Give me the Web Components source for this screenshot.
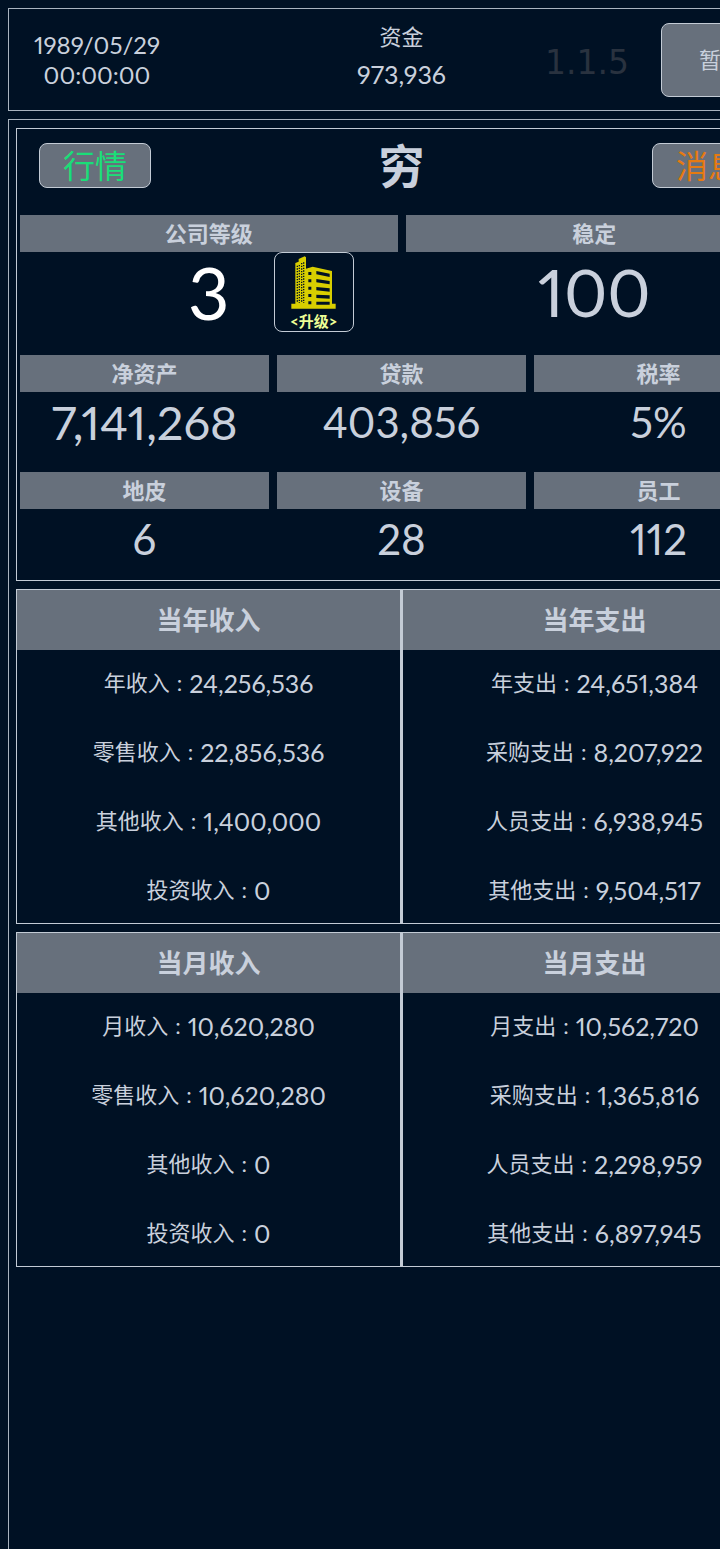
<!DOCTYPE html>
<html lang="zh-CN">
<head>
<meta charset="utf-8">
<meta name="viewport" content="width=device-width, initial-scale=1">
<title>穷</title>
<style>
  html {
    --bg: #001124;
    --bar: #67707c;
    --line: #a9b3bf;
    --line-strong: #c3cbd5;
    --text: #c9d0dc;
    background: var(--bg);
  }
  body {
    margin: 0;
    overflow: hidden;
    color: var(--text);
    font-family: Lato, "Noto Sans CJK SC", sans-serif;
    font-size: 22px;
    font-variant-numeric: proportional-nums;
  }
</style>
</head>
<body>
<game-app></game-app>

<script>
class GameButton extends HTMLElement {
  constructor() {
    super();
    this.attachShadow({ mode: "open" });
    this.shadowRoot.innerHTML = `
    <style>
      :host {
        display: inline-block;
      }
      button {
        display: block;
        box-sizing: border-box;
        width: 100%;
        height: 100%;
        margin: 0;
        padding: 0;
        border: 1px solid var(--line-strong);
        border-radius: 8px;
        background: var(--button-bg, var(--bar));
        color: inherit;
        font: inherit;
        white-space: nowrap;
        cursor: pointer;
      }
    </style>
    <button type="button"><slot></slot></button>
    `;
  }
}
customElements.define("game-button", GameButton);

class TopBar extends HTMLElement {
  constructor() {
    super();
    this.attachShadow({ mode: "open" });
    this.shadowRoot.innerHTML = `
    <style>
      :host {
        display: grid;
        grid-template-columns: 268px 1fr 122px 146px;
        align-items: center;
        padding: 13px 0;
        border: 1px solid var(--line);
        text-align: center;
        line-height: 30px;
      }
      .date {
        width: 176px;
        font-size: 24px;
      }
      .money {
        display: grid;
        gap: 7px;
        padding-bottom: 8px;
      }
      .money b {
        font-size: 25px;
        font-weight: normal;
      }
      .version {
        padding-top: 6px;
        color: #29323f;
        font-family: "DejaVu Sans", sans-serif;
        font-size: 33px;
      }
      game-button {
        width: 120px;
        height: 74px;
        justify-self: center;
      }
    </style>
    <div class="date">1989/05/29<br>00:00:00</div>
    <div class="money"><span>资金</span><b>973,936</b></div>
    <div class="version">1.1.5</div>
    <game-button>暂停</game-button>
    `;
  }
}
customElements.define("top-bar", TopBar);

class StatCell extends HTMLElement {
  constructor() {
    super();
    this.attachShadow({ mode: "open" });
    this.shadowRoot.innerHTML = `
    <style>
      :host {
        display: block;
        text-align: center;
      }
      h3 {
        margin: 0;
        background: var(--bar);
        font-size: 22px;
        font-weight: bold;
        line-height: 37px;
      }
      .value {
        display: grid;
        grid-template-columns: 1fr 130px 1fr;
        align-items: center;
        height: var(--value-height, 60px);
        font-size: 42px;
        line-height: 60px;
      }
      .number {
        grid-column: 2;
        justify-self: center;
        white-space: nowrap;
      }
      :host([size="medium"]) .value {
        font-size: 47px;
      }
      :host([size="large"]) .value {
        font-size: 66px;
      }
      :host([size="huge"]) .value {
        font-size: 72px;
      }
      :host([bright]) .value {
        color: #fff;
      }
    </style>
    <h3></h3>
    <div class="value"><span class="number"><slot></slot></span><slot name="action"></slot></div>
    `;
  }
  connectedCallback() {
    this.shadowRoot.querySelector("h3").textContent = this.getAttribute("label");
  }
}
customElements.define("stat-cell", StatCell);

class UpgradeButton extends HTMLElement {
  constructor() {
    super();
    this.attachShadow({ mode: "open" });
    this.shadowRoot.innerHTML = `
    <style>
      :host {
        display: block;
        width: 80px;
        height: 80px;
      }
      game-button {
        --button-bg: transparent;
        width: 100%;
        height: 100%;
        color: #eeff96;
        font-size: 15px;
        font-weight: bold;
        line-height: 18px;
      }
      svg {
        display: block;
        width: 46px;
        height: 54px;
        margin: 2px auto 2px;
      }
    </style>
    <game-button>
      <svg viewBox="84 33 138 162" aria-hidden="true">
        <path fill="#d8ce00" d="M97 54l10-4v-8l18-8 4 3v34l20-6 58 13v98h11v15H85v-15h12z"/>
        <path stroke="#001124" stroke-width="4" stroke-dasharray="4 4" d="M103 62v112M109 60v114M116 54v120M122 52v122"/>
        <g fill="#001124">
          <path d="M136 81h9v9h-9zM136 103h9v9h-9zM136 125h9v9h-9zM136 147h9v9h-9zM136 169h9v9h-9z"/>
          <path d="M160 78l40 8v10l-40-8zM160 102l40 6v10l-40-6zM160 126l40 4v10l-40-4zM160 149l40 2v10l-40-2zM160 170h40v9h-40z"/>
        </g>
      </svg>
      &lt;升级&gt;
    </game-button>
    `;
  }
}
customElements.define("upgrade-button", UpgradeButton);

class CompanyPanel extends HTMLElement {
  constructor() {
    super();
    this.attachShadow({ mode: "open" });
    this.shadowRoot.innerHTML = `
    <style>
      :host {
        display: block;
        padding: 0 3px 11px;
        border: 1px solid var(--line-strong);
      }
      header {
        display: flex;
        align-items: center;
        justify-content: space-between;
        padding: 14px 19px 27px;
      }
      header game-button {
        width: 112px;
        height: 45px;
        font-size: 32px;
        line-height: 40px;
      }
      .market {
        color: #1ade78;
      }
      .news {
        color: #e67a12;
      }
      h1 {
        margin: 0;
        font-size: 46px;
        line-height: 45px;
      }
      .row {
        display: grid;
        grid-auto-columns: 1fr;
        grid-auto-flow: column;
        gap: 8px;
      }
      .row + .row {
        margin-top: 20px;
      }
      .top {
        --value-height: 80px;
        padding-bottom: 3px;
      }
    </style>
    <header>
      <game-button class="market">行情</game-button>
      <h1>穷</h1>
      <game-button class="news">消息</game-button>
    </header>
    <div class="row top">
      <stat-cell label="公司等级" size="huge" bright>3<upgrade-button slot="action"></upgrade-button></stat-cell>
      <stat-cell label="稳定" size="large">100</stat-cell>
    </div>
    <div class="row">
      <stat-cell label="净资产" size="medium">7,141,268</stat-cell>
      <stat-cell label="贷款">403,856</stat-cell>
      <stat-cell label="税率">5%</stat-cell>
    </div>
    <div class="row">
      <stat-cell label="地皮">6</stat-cell>
      <stat-cell label="设备">28</stat-cell>
      <stat-cell label="员工">112</stat-cell>
    </div>
    `;
  }
}
customElements.define("company-panel", CompanyPanel);

class LedgerItem extends HTMLElement {
  constructor() {
    super();
    this.attachShadow({ mode: "open" });
    this.shadowRoot.innerHTML = `
    <style>
      :host {
        display: flex;
        align-items: center;
        justify-content: center;
        gap: 7px;
        height: 66px;
        line-height: 30px;
        white-space: nowrap;
      }
      .amount {
        font-size: 25px;
      }
    </style>
    <span class="label"></span><span>:</span><span class="amount"><slot></slot></span>
    `;
  }
  connectedCallback() {
    this.shadowRoot.querySelector(".label").textContent = this.getAttribute("label");
  }
}
customElements.define("ledger-item", LedgerItem);

class LedgerColumn extends HTMLElement {
  constructor() {
    super();
    this.attachShadow({ mode: "open" });
    this.shadowRoot.innerHTML = `
    <style>
      :host {
        display: block;
        text-align: center;
      }
      h2 {
        margin: 0;
        background: var(--bar);
        font-size: 26px;
        font-weight: bold;
        line-height: 60px;
      }
      .items {
        display: grid;
        gap: 3px;
      }
    </style>
    <h2></h2>
    <div class="items"><slot></slot></div>
    `;
  }
  connectedCallback() {
    this.shadowRoot.querySelector("h2").textContent = this.getAttribute("heading");
  }
}
customElements.define("ledger-column", LedgerColumn);

class LedgerPanel extends HTMLElement {
  constructor() {
    super();
    this.attachShadow({ mode: "open" });
    this.shadowRoot.innerHTML = `
    <style>
      :host {
        display: grid;
        grid-template-columns: 1fr 1fr;
        gap: 3px;
        border: 1px solid var(--line-strong);
        /* the column gap shows through as the divider */
        background: var(--line-strong);
      }
      ::slotted(ledger-column) {
        background: var(--bg);
      }
    </style>
    <slot></slot>
    `;
  }
}
customElements.define("ledger-panel", LedgerPanel);

class GameApp extends HTMLElement {
  constructor() {
    super();
    this.attachShadow({ mode: "open" });
    this.shadowRoot.innerHTML = `
    <style>
      :host {
        display: flex;
        flex-direction: column;
        gap: 8px;
        box-sizing: border-box;
        /* the board runs past the right edge of the window */
        width: calc(100% + 83px);
        min-height: 100vh;
        padding: 8px 8px 0;
      }
      main {
        flex: 1;
        display: flex;
        flex-direction: column;
        gap: 8px;
        padding: 8px 7px;
        border: 1px solid var(--line);
        border-bottom: 0;
      }
    </style>
    <top-bar></top-bar>
    <main>
      <company-panel></company-panel>
      <ledger-panel>
        <ledger-column heading="当年收入">
          <ledger-item label="年收入">24,256,536</ledger-item>
          <ledger-item label="零售收入">22,856,536</ledger-item>
          <ledger-item label="其他收入">1,400,000</ledger-item>
          <ledger-item label="投资收入">0</ledger-item>
        </ledger-column>
        <ledger-column heading="当年支出">
          <ledger-item label="年支出">24,651,384</ledger-item>
          <ledger-item label="采购支出">8,207,922</ledger-item>
          <ledger-item label="人员支出">6,938,945</ledger-item>
          <ledger-item label="其他支出">9,504,517</ledger-item>
        </ledger-column>
      </ledger-panel>
      <ledger-panel>
        <ledger-column heading="当月收入">
          <ledger-item label="月收入">10,620,280</ledger-item>
          <ledger-item label="零售收入">10,620,280</ledger-item>
          <ledger-item label="其他收入">0</ledger-item>
          <ledger-item label="投资收入">0</ledger-item>
        </ledger-column>
        <ledger-column heading="当月支出">
          <ledger-item label="月支出">10,562,720</ledger-item>
          <ledger-item label="采购支出">1,365,816</ledger-item>
          <ledger-item label="人员支出">2,298,959</ledger-item>
          <ledger-item label="其他支出">6,897,945</ledger-item>
        </ledger-column>
      </ledger-panel>
    </main>
    `;
  }
}
customElements.define("game-app", GameApp);
</script>
</body>
</html>
